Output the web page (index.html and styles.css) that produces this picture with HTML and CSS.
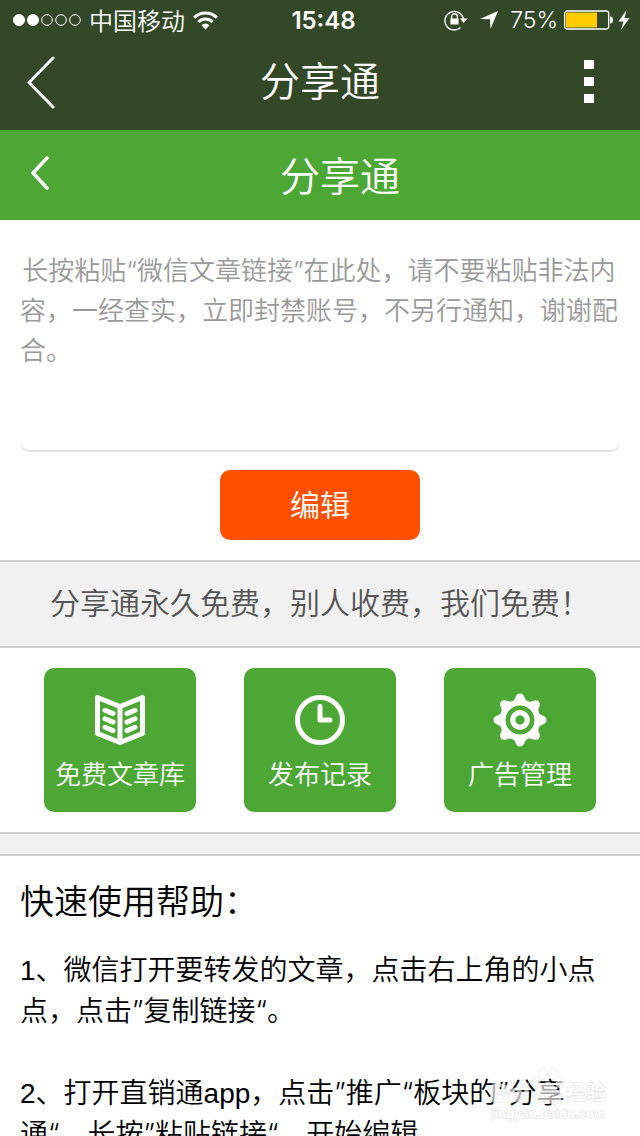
FILE: index.html
```html
<!DOCTYPE html>
<html lang="zh-CN">
<head>
<meta charset="utf-8">
<meta name="viewport" content="width=device-width, initial-scale=1">
<title>分享通</title>
<link rel="stylesheet" href="styles.css">
</head>
<body>
<div class="app">
  <header class="top">
    <div class="status">
      <div class="status-left">
        <svg class="icon" width="68" height="12" viewBox="0 0 68 12" fill="none" stroke="#fff"><circle cx="6" cy="6" r="5.5" fill="#fff"/><circle cx="20" cy="6" r="5.5" fill="#fff"/><circle cx="34" cy="6" r="5.3"/><circle cx="48" cy="6" r="5.3"/><circle cx="62" cy="6" r="5.3"/></svg>
        <span class="carrier">中国移动</span>
        <svg class="icon" width="25" height="19" viewBox="0 0 25 19" fill="none" stroke="#fff" stroke-width="3"><path d="M1.2 6.6a16 16 0 0 1 22.6 0M5.4 11a10 10 0 0 1 14.2 0"/><path d="M12.5 18.5 8.4 14.2a5.8 5.8 0 0 1 8.2 0z" fill="#fff" stroke="none"/></svg>
      </div>
      <time class="clock">15:48</time>
      <div class="status-right">
        <svg class="icon" width="24" height="22" viewBox="0 0 24 22" fill="none" stroke="#fff" stroke-width="1.4"><path d="M16.5 18.6A9.3 9.3 0 1 1 19.4 10"/><path d="M7.6 10V7.6a2.9 2.9 0 0 1 5.8 0V10"/><path d="M6.4 9.5h8.2V15.500H6.400zM16 9.500h7.500L19.700 14z" fill="#fff" stroke="none"/></svg>
        <svg class="icon" width="18" height="18" viewBox="0 0 18 18" fill="#fff"><path d="M18 0 10.500 18 10 8.300 0 8z"/></svg>
        <span class="percent">75%</span>
        <svg class="icon" width="66" height="20" viewBox="0 0 66 20"><rect x=".7" y="1" width="44" height="18" rx="2.500" fill="none" stroke="#fff" stroke-width="1.300"/><rect x="2" y="2.500" width="31" height="15" fill="#fc0"/><path d="M46 6.500q3 0 3 3.500t-3 3.500z" fill="#fff"/><path d="M62.500 0 54.500 11.500H59.500L57 20 65.500 8H60.500z" fill="#fff"/></svg>
      </div>
    </div>
    <nav class="nav">
      <button class="icon-button" type="button" aria-label="返回"><svg class="icon" width="30" height="54" viewBox="0 0 30 54" fill="none" stroke="#fff" stroke-width="3" stroke-linecap="round" stroke-linejoin="round"><path d="M27 3 3 27.500 27 52"/></svg></button>
      <h1 class="title">分享通</h1>
      <button class="icon-button more" type="button" aria-label="更多"><svg class="icon" width="10" height="44" viewBox="0 0 10 44" fill="#fff"><path d="M0 0h10v9H0zM0 17h10v9H0zM0 34h10v9H0z"/></svg></button>
    </nav>
  </header>

  <main class="content">
    <div class="subnav">
      <button class="icon-button" type="button" aria-label="后退"><svg class="icon" width="20" height="42" viewBox="0 0 20 42" fill="none" stroke="#fff" stroke-width="3.500" stroke-linecap="round" stroke-linejoin="round"><path d="M17 2 3 17 17 32"/></svg></button>
      <h2 class="title">分享通</h2>
    </div>

    <form class="editor">
      <textarea class="link-box" aria-label="文章链接" placeholder="&#8202;长按粘贴“微信文章链接”在此处，请不要粘贴非法内容，一经查实，立即封禁账号，不另行通知，谢谢配合。"></textarea>
      <button class="submit" type="button">编辑</button>
    </form>

    <p class="notice">分享通永久免费，别人收费，我们免费！</p>

    <div class="tiles">
      <button class="tile" type="button">
        <svg class="icon" width="54" height="54" viewBox="0 0 54 54" fill="none" stroke="#fff" stroke-linecap="round" stroke-linejoin="round"><path d="M4.500 4.500 27 13.500 49.500 4.500V40.500L27 49.500 4.500 40.500zM27 13.500V49" stroke-width="5"/><path d="M12 17.300 20 20.600M12 25.800 20 29.100M12 34.300 20 37.600M42 17.300 34 20.600M42 25.800 34 29.100M42 34.300 34 37.600" stroke-width="5"/></svg>
        <span>免费文章库</span>
      </button>
      <button class="tile" type="button">
        <svg class="icon" width="54" height="54" viewBox="0 0 54 54" fill="none" stroke="#fff" stroke-linecap="round" stroke-linejoin="round"><circle cx="27" cy="27" r="22.500" stroke-width="5"/><path d="M27 13.500V27H37" stroke-width="5"/></svg>
        <span>发布记录</span>
      </button>
      <button class="tile" type="button">
        <svg class="icon" width="54" height="54" viewBox="-27 -27 54 54" fill="#fff"><defs><path id="tooth" d="M-9-16C-5-18-5-26.500 0-26.500S5-18 9-16z"/></defs><circle r="17.500" fill="none" stroke="#fff" stroke-width="6"/><use href="#tooth"/><use href="#tooth" transform="rotate(45)"/><use href="#tooth" transform="rotate(90)"/><use href="#tooth" transform="rotate(135)"/><use href="#tooth" transform="rotate(180)"/><use href="#tooth" transform="rotate(225)"/><use href="#tooth" transform="rotate(270)"/><use href="#tooth" transform="rotate(315)"/><circle r="7.300" fill="none" stroke="#fff" stroke-width="5.200"/></svg>
        <span>广告管理</span>
      </button>
    </div>

    <section class="help">
      <h2 class="help-title">快速使用帮助：</h2>
      <p class="step">1、微信打开要转发的文章，点击右上角的小点点，点击<span class="quote">”</span>复制链接<span class="quote">“</span>。</p>
      <p class="step">2、打开直销通app，点击<span class="quote">”</span>推广<span class="quote">“</span>板块的<span class="quote">”</span>分享<span class="keep">通<span class="quote">“</span>，</span>长按<span class="quote">”</span>粘贴链接<span class="quote">“</span>，开始编辑</p>
    </section>
  </main>

  <div class="watermark">
    <div class="brand">
      <span>Bai</span>
      <svg class="icon" width="36" height="38" viewBox="0 0 36 38" fill="#fff" stroke="#ccc"><ellipse cx="6" cy="15" rx="4" ry="5"/><ellipse cx="13" cy="6" rx="4" ry="5.500"/><ellipse cx="23" cy="6" rx="4" ry="5.500"/><ellipse cx="30" cy="15" rx="4" ry="5"/><path d="M18 14c5 0 6 6 10 9 5 4 4 13-3 13-3 0-4-1-7-1s-4 1-7 1c-7 0-8-9-3-13 4-3 5-9 10-9z"/><text x="18" y="33" class="paw-text" text-anchor="middle">du</text></svg>
      <span class="brand-cn">经验</span>
    </div>
    <div class="site">jingyan.baidu.com</div>
  </div>
</div>
</body>
</html>
```

FILE: styles.css
```css
*,
*::before {
  box-sizing: border-box;
}

body {
  margin: 0;
  background: #fff;
  color: #000;
  font-family: "Liberation Sans", "Noto Sans CJK SC", sans-serif;
  font-weight: 350;
}

button,
textarea {
  font: inherit;
}

h1,
h2,
p {
  margin: 0;
  font-weight: 350;
}

.icon {
  display: block;
  flex: none;
}

.app {
  position: relative;
  display: flex;
  flex-direction: column;
  height: 100vh;
}

.top {
  flex: none;
  padding-bottom: 6px;
  background: #324827;
  color: #fff;
}

.status {
  display: grid;
  grid-template-columns: 1fr auto 1fr;
  align-items: center;
  height: 40px;
  padding: 0 10px 0 13px;
}

.status-left,
.status-right {
  display: flex;
  align-items: center;
  gap: 8px;
}

.status-right {
  justify-content: flex-end;
  gap: 6px;
}

.status-right .icon:first-child {
  margin-right: 6px;
}

.carrier {
  padding-top: 3px;
  font-size: 24px;
  line-height: 36px;
}

.clock {
  padding-left: 4px;
  font-family: Inter, sans-serif;
  font-size: 24px;
  font-weight: 600;
}

.percent {
  margin-left: 6px;
  font-family: Inter, sans-serif;
  font-size: 23px;
}

.nav {
  display: grid;
  grid-template-columns: 60px 1fr 60px;
  align-items: center;
  height: 84px;
  padding: 0 20px;
}

.icon-button {
  display: flex;
  align-items: center;
  padding: 0 6px;
  border: 0;
  background: none;
  color: inherit;
}

.more {
  justify-content: flex-end;
  padding: 0 26px;
}

.title {
  font-size: 40px;
  line-height: 60px;
  text-align: center;
}

.content {
  flex: 1;
  min-height: 0;
  overflow-y: auto;
  scrollbar-width: none;
}

.subnav {
  display: grid;
  grid-template-columns: 40px 1fr;
  align-items: center;
  height: 90px;
  padding-top: 4px;
  background: #4ca735;
  color: #fff;
}

.subnav .icon-button {
  padding: 0 0 0 30px;
}

.editor {
  display: flex;
  flex-direction: column;
  align-items: center;
  gap: 18px;
  padding: 20px;
}

.link-box {
  display: block;
  width: 100%;
  height: 212px;
  padding: 11px 0 0;
  border: 0;
  border-bottom: 2px solid #e0e0e0;
  border-radius: 10px;
  background: #fff;
  font-family: Inter, "Noto Sans CJK SC", sans-serif;
  font-size: 26px;
  line-height: 40px;
  resize: none;
  outline: 0;
}

.link-box::placeholder {
  color: #999;
  opacity: 1;
}

.submit {
  width: 200px;
  height: 70px;
  padding: 0 0 4px;
  border: 0;
  border-radius: 10px;
  background: #ff5000;
  color: #fff;
  font-size: 30px;
}

.notice {
  padding: 20px;
  border: solid #d0d0d0;
  border-width: 2px 0;
  background: #f1f1f1;
  color: #555;
  font-size: 30px;
  line-height: 44px;
  text-align: center;
}

.tiles {
  display: grid;
  grid-template-columns: repeat(3, 1fr);
  justify-items: center;
  padding: 20px;
}

.tile {
  display: flex;
  flex-direction: column;
  align-items: center;
  gap: 9px;
  width: 152px;
  height: 144px;
  padding: 25px 0 0;
  border: 0;
  border-radius: 10px;
  background: #4ca735;
  color: #fff;
  font-size: 26px;
  line-height: 38px;
}

.help {
  padding: 20px;
}

.help::before {
  content: "";
  display: block;
  height: 24px;
  margin: -20px -20px 20px;
  border: solid #d0d0d0;
  border-width: 2px 0;
  background: #f1f1f1;
}

.help-title {
  margin-bottom: 22px;
  font-size: 34px;
  line-height: 52px;
}

.step {
  margin-bottom: 41px;
  font-size: 28px;
  line-height: 41px;
}

.quote {
  font-family: Inter, sans-serif;
  line-height: 1;
}

.keep {
  white-space: nowrap;
}

.watermark {
  position: absolute;
  right: 34px;
  bottom: 14px;
  opacity: 0.65;
  color: #fff;
  font-weight: 700;
  -webkit-text-stroke: 1px #ccc;
  paint-order: stroke fill;
  pointer-events: none;
}

.brand {
  display: flex;
  align-items: flex-end;
  font-size: 25px;
  line-height: 26px;
}

.brand-cn {
  font-size: 20px;
}

.paw-text {
  font-size: 16px;
}

.site {
  font-size: 13px;
  line-height: 16px;
}
```
